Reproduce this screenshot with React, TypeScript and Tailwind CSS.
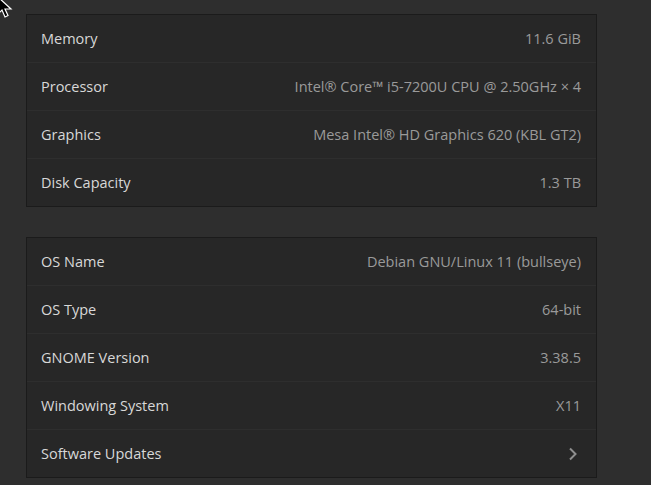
const hardware = [
  ["Memory", "11.6 GiB"],
  ["Processor", "Intel® Core™ i5-7200U CPU @ 2.50GHz × 4"],
  ["Graphics", "Mesa Intel® HD Graphics 620 (KBL GT2)"],
  ["Disk Capacity", "1.3 TB"],
];

const software = [
  ["OS Name", "Debian GNU/Linux 11 (bullseye)"],
  ["OS Type", "64-bit"],
  ["GNOME Version", "3.38.5"],
  ["Windowing System", "X11"],
];

function Row({ label, value, last }: { label: string; value?: string; last?: boolean }) {
  return (
    <div
      className={`flex items-center justify-between pl-[14px] pr-[15px] ${
        last ? "h-[47px]" : "h-[48px] border-b border-[#2e2e2e]"
      }`}
    >
      <span className="text-[#d8d8d8]">{label}</span>
      {value ? (
        <span className="text-[#9a9a9a]">{value}</span>
      ) : (
        <svg width="16" height="16" viewBox="0 0 16 16" className="mr-[1px]">
          <path d="M6 2.5l5.5 5.5L6 13.5" fill="none" stroke="#8e8e8e" strokeWidth="2" />
        </svg>
      )}
    </div>
  );
}

export default function App() {
  return (
    <div
      className="relative h-[485px] w-[651px] overflow-hidden bg-[#2e2e2e] text-[14.5px]"
      style={{ fontFamily: '"Open Sans", "Noto Sans", sans-serif' }}
    >
      {/* Cursor */}
      <svg className="absolute left-[-3px] top-[-4px]" width="16" height="24" viewBox="0 0 16 24">
        <path d="M1 1v17l4-4 3 7 3-1.5-3-6.5h6z" fill="#000" stroke="#fff" strokeWidth="1.2" />
      </svg>

      <div className="flex w-[571px] flex-col gap-[30px] pl-[26px] pt-[14px] box-content">
        <div className="border border-[#1b1b1b] bg-[#272727]">
          {hardware.map(([l, v], i) => (
            <Row key={l} label={l} value={v} last={i === hardware.length - 1} />
          ))}
        </div>

        <div className="border border-[#1b1b1b] bg-[#272727]">
          {software.map(([l, v]) => (
            <Row key={l} label={l} value={v} />
          ))}
          <Row label="Software Updates" last />
        </div>
      </div>
    </div>
  );
}
